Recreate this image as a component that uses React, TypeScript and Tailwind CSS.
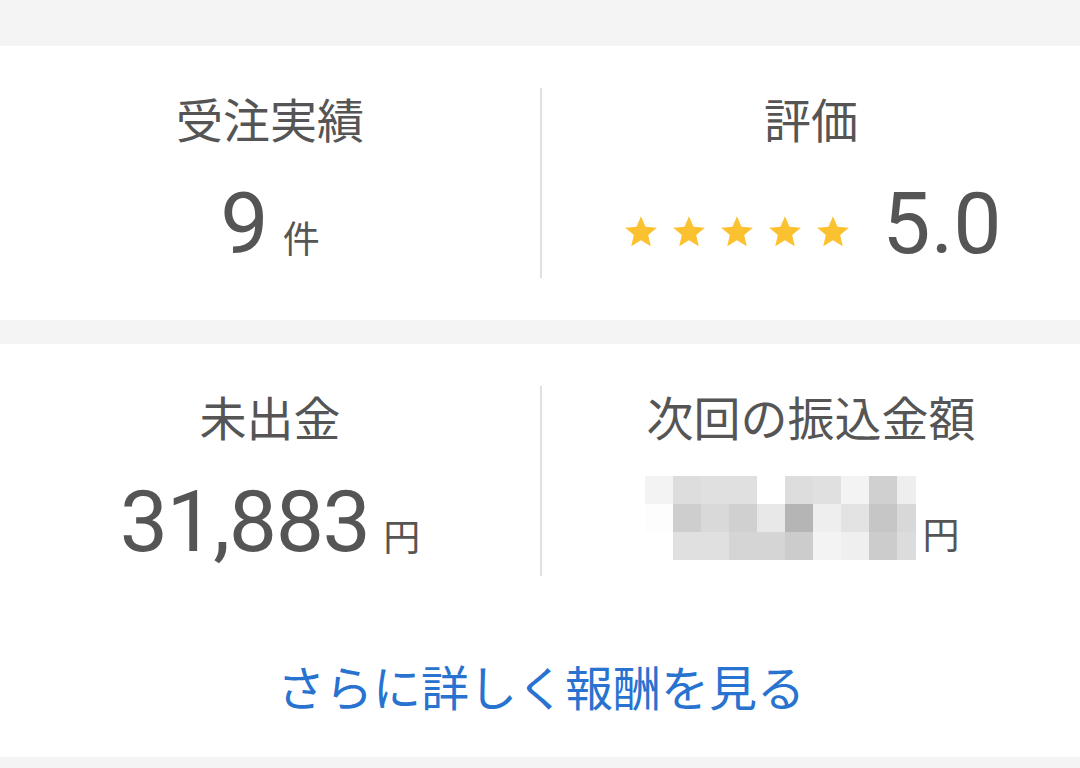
const JP = "font-['Noto_Sans_CJK_JP','Noto_Sans',sans-serif]";
const NUM = "font-['Roboto','Noto_Sans_CJK_JP',sans-serif]";

// pixelated (blurred) amount, one class per cell
const MOSAIC: string[][] = [
  ["bg-[#f3f3f3]", "bg-[#dddddd]", "bg-[#e0e0e0]", "bg-[#e0e0e0]", "bg-white", "bg-[#dddddd]", "bg-[#e0e0e0]", "bg-[#f3f3f3]", "bg-[#d0d0d0]", "bg-[#eeeeee]"],
  ["bg-[#fdfdfd]", "bg-[#cecece]", "bg-[#d9d9d9]", "bg-[#d0d0d0]", "bg-[#e8e8e8]", "bg-[#b5b5b5]", "bg-[#eeeeee]", "bg-[#e3e3e3]", "bg-[#c6c6c6]", "bg-[#d8d8d8]"],
  ["bg-white", "bg-[#e0e0e0]", "bg-[#e0e0e0]", "bg-[#d5d5d5]", "bg-[#d5d5d5]", "bg-[#cccccc]", "bg-[#f3f3f3]", "bg-[#efefef]", "bg-[#cccccc]", "bg-[#dcdcdc]"],
];

function Star() {
  return (
    <svg viewBox="0 0 24 24" className="w-[38px] h-[38px] fill-[#fcc12f]">
      <path d="M12 17.27L18.18 21l-1.64-7.03L22 9.24l-7.19-.61L12 2 9.19 8.63 2 9.24l5.46 4.73L5.82 21z" />
    </svg>
  );
}

function Title({ children }: { children: string }) {
  return (
    <div className={`${JP} text-[47px] leading-[47px] text-[#555555] mt-[6px]`}>{children}</div>
  );
}

function Unit({ children }: { children: string }) {
  return <span className={`${JP} text-[37px] leading-none text-[#555555]`}>{children}</span>;
}

function Mosaic() {
  return (
    <div className="grid grid-cols-[repeat(9,28px)_19px] grid-rows-[repeat(3,28px)]">
      {MOSAIC.flatMap((row, r) => row.map((cls, c) => <div key={`${r}-${c}`} className={cls} />))}
    </div>
  );
}

export default function App() {
  return (
    <div className="w-[1080px] h-[768px] bg-[#f4f4f4] flex flex-col overflow-hidden">
      <div className="h-[46px] shrink-0" />

      {/* 受注実績 / 評価 */}
      <div className="bg-white h-[274px] shrink-0 py-[42px] grid grid-cols-2">
        <div className="flex flex-col items-center">
          <Title>受注実績</Title>
          <div className="flex items-baseline gap-[14px] mt-[40px]">
            <span className={`${NUM} text-[86px] leading-[86px] text-[#555555]`}>9</span>
            <Unit>件</Unit>
          </div>
        </div>
        <div className="flex flex-col items-center border-l-2 border-[#e0e0e0]">
          <Title>評価</Title>
          <div className="flex items-baseline mt-[40px]">
            <div className="flex gap-[10px] self-center translate-y-[8px] ml-[2px]">
              <Star />
              <Star />
              <Star />
              <Star />
              <Star />
            </div>
            <span className={`${NUM} text-[86px] leading-[86px] text-[#555555] ml-[30px]`}>5.0</span>
          </div>
        </div>
      </div>

      <div className="h-[24px] shrink-0" />

      {/* 未出金 / 次回の振込金額 */}
      <div className="bg-white h-[413px] shrink-0 pt-[42px] flex flex-col">
        <div className="grid grid-cols-2 h-[190px]">
          <div className="flex flex-col items-center">
            <Title>未出金</Title>
            <div className="flex items-baseline gap-[14px] mt-[40px]">
              <span className={`${NUM} text-[86px] leading-[86px] text-[#555555] tracking-[-1.5px]`}>31,883</span>
              <Unit>円</Unit>
            </div>
          </div>
          <div className="flex flex-col items-center border-l-2 border-[#e0e0e0]">
            <Title>次回の振込金額</Title>
            <div className="flex items-end gap-[7px] mt-[37px] pr-[18px]">
              <Mosaic />
              <span className={`${JP} text-[37px] leading-none text-[#555555] mb-[8px]`}>円</span>
            </div>
          </div>
        </div>
        <div className="flex-1 flex items-center justify-center pt-[36px]">
          <span className={`${JP} text-[48px] leading-[48px] text-[#2872d0] ml-[2px]`}>さらに詳しく報酬を見る</span>
        </div>
      </div>
    </div>
  );
}
